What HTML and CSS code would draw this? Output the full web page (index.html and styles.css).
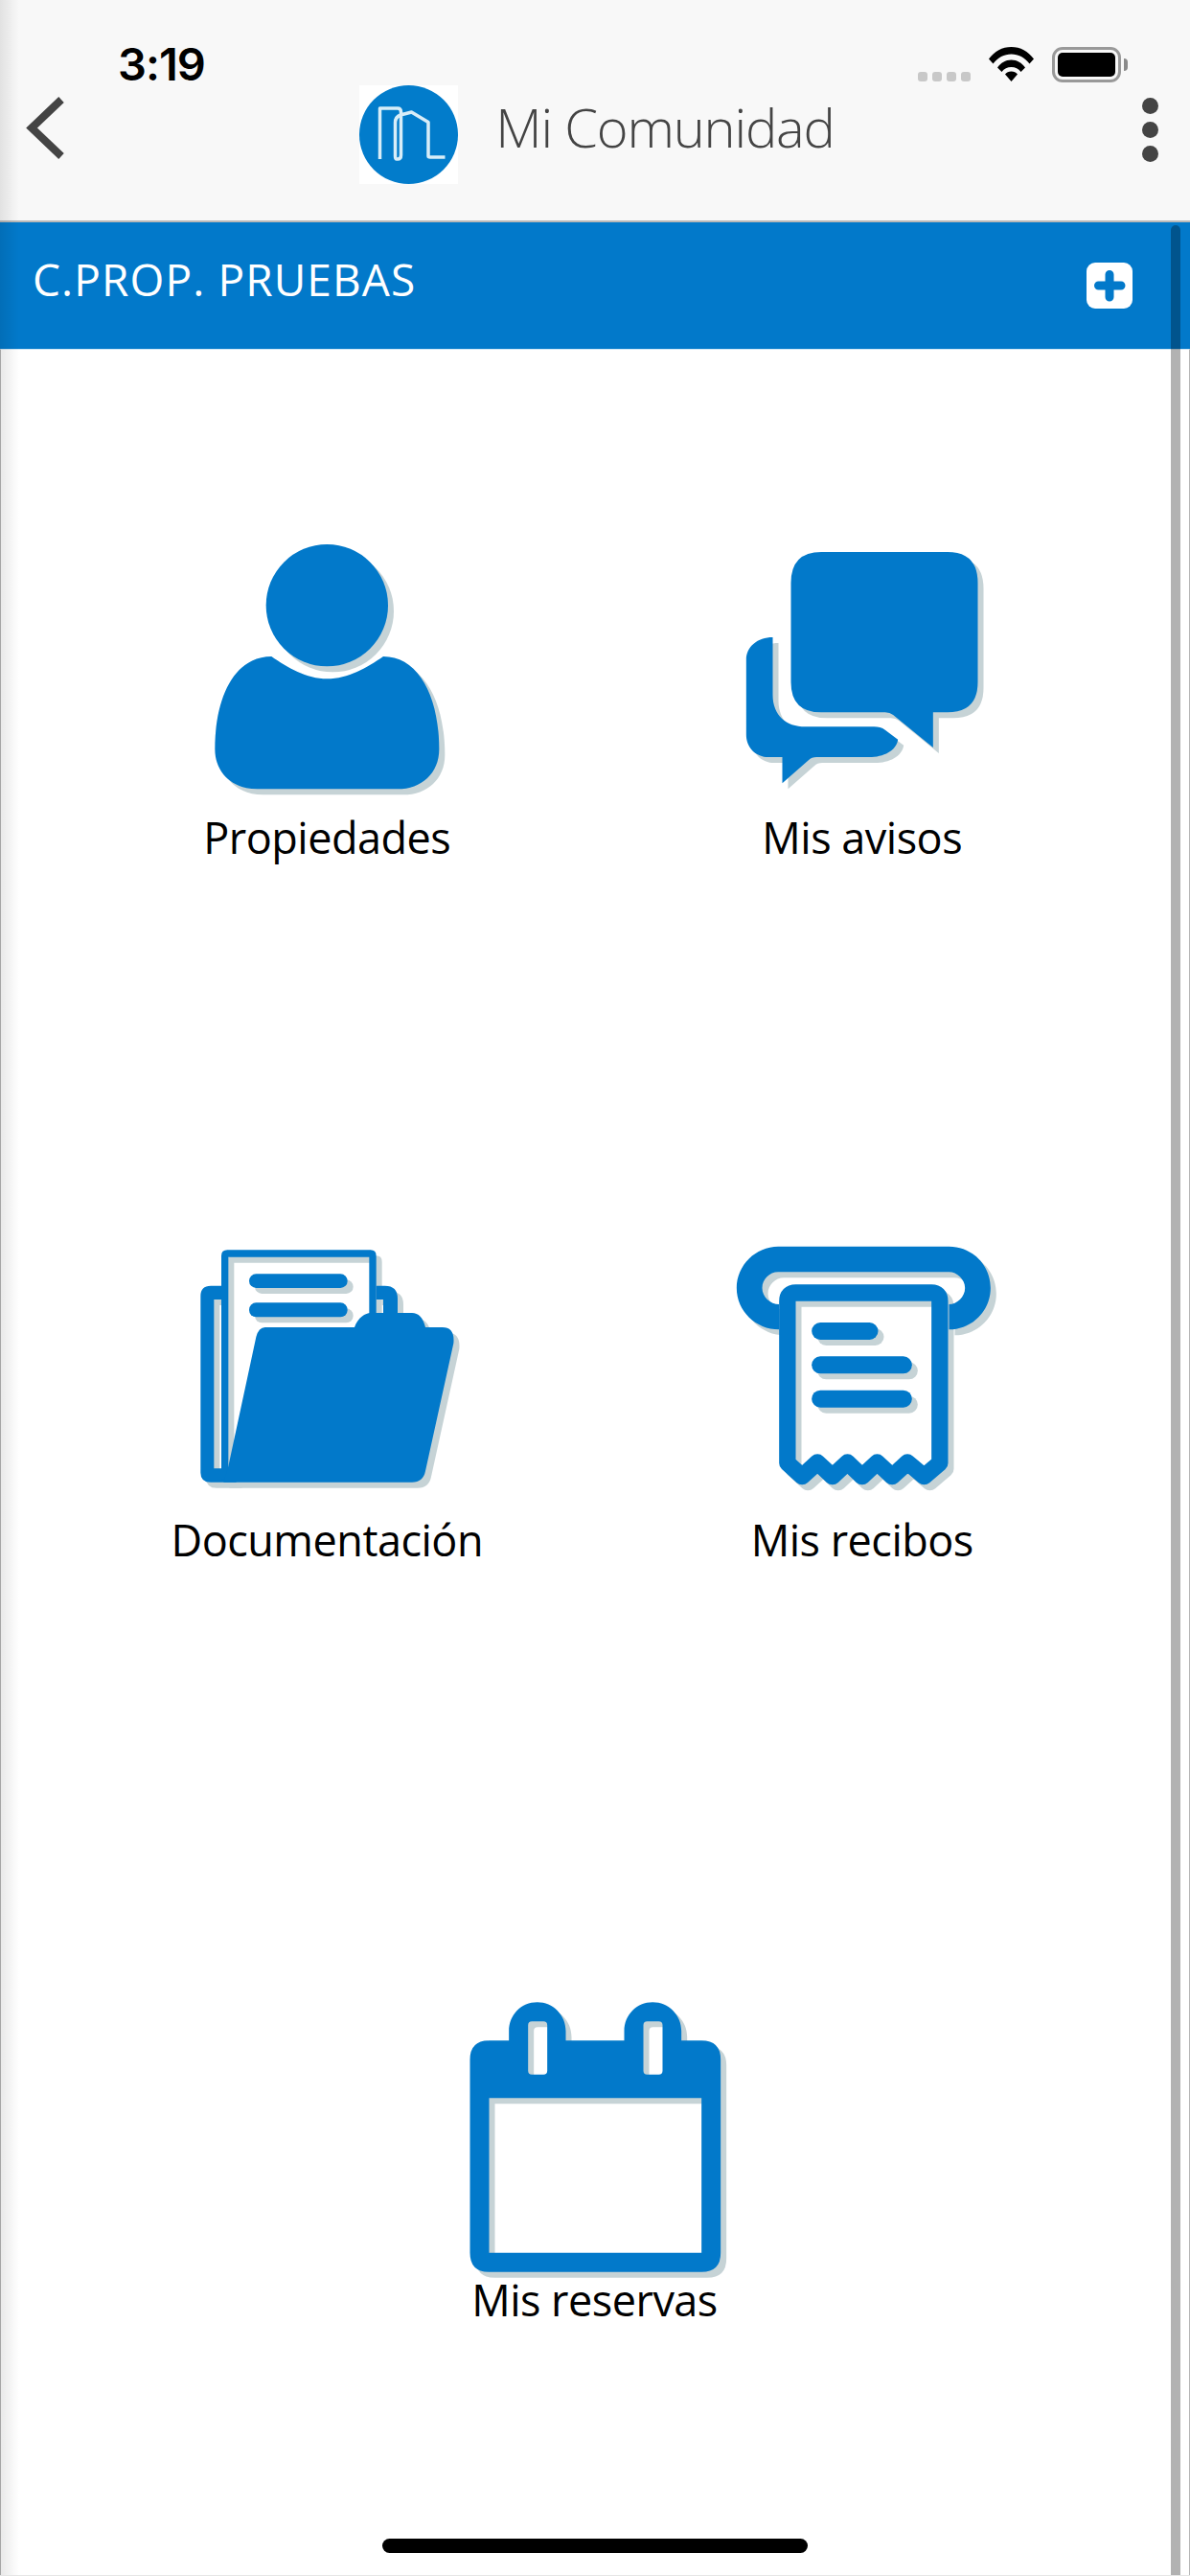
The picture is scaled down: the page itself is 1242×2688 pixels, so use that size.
FILE: index.html
```html
<!DOCTYPE html>
<html lang="es">
<head>
<meta charset="utf-8">
<title>Mi Comunidad</title>
<link rel="stylesheet" href="styles.css">
</head>
<body>
<div class="app">
  <header class="topbar">
    <div class="status">
      <span class="time">3:19</span>
      <div class="status-icons">
        <div class="signal"><i></i><i></i><i></i><i></i></div>
        <svg class="wifi" width="47" height="36" viewBox="0 0 47 36"><path d="M0 12.500C6 4.500 14 0 23.500 0S41 4.500 47 12.500L42.500 17.500C37.500 11 31 7.500 23.500 7.500S9.500 11 4.500 17.500Z"/><path d="M9 21.500C12.500 16.500 17.500 13.500 23.500 13.500S34.500 16.500 38 21.500L33.500 26C31 22.800 27.500 21 23.500 21S16 22.800 13.500 26Z"/><path d="M17 28.500C18.500 26.500 20.800 25.500 23.500 25.500S28.500 26.500 30 28.500L23.500 36Z"/></svg>
        <div class="battery"><div class="battery-fill"></div></div>
        <div class="battery-nub"></div>
      </div>
    </div>
    <nav class="nav">
      <svg class="back" width="40" height="66" viewBox="0 0 40 66"><path d="M37 3L6 32.500L37 62" fill="none" stroke="#444" stroke-width="8"/></svg>
      <div class="brand">
        <svg class="logo" width="103" height="103" viewBox="0 0 103 103">
          <rect width="103" height="103" fill="#fff"/>
          <circle cx="51.500" cy="51.500" r="51.500" fill="#027ccb"/>
          <path d="M21.500 77V24H40Q43.500 24 43.500 28V73Q43.500 77 40 77H39Q37.500 77 37.500 74V39Q37.500 33 43 31L54.500 28L72 38.500V74Q72 75 74 75H89.500" fill="none" stroke="#d8edf8" stroke-width="3.500" stroke-linejoin="round"/>
        </svg>
        <span class="brand-name">Mi Comunidad</span>
      </div>
      <div class="menu"><i></i><i></i><i></i></div>
    </nav>
  </header>

  <section class="bar">
    <h1 class="bar-title">C.PROP. PRUEBAS</h1>
    <svg class="add" width="48" height="48" viewBox="0 0 48 48"><rect width="48" height="48" rx="9" fill="#fff"/><path d="M24 12.500V36M12.500 24H36" fill="none" stroke="#0279ca" stroke-width="9" stroke-linecap="round"/></svg>
  </section>

  <main class="menu-grid">
    <a class="tile">
      <svg class="tile-icon" width="340" height="306" viewBox="-27 0 1020 918">
        <circle cx="484" cy="275" r="191"/>
        <path d="M310 435C360 470 420 505 484 505C550 505 610 470 660 435C770 435 835 560 835 725C835 800 780 850 705 850H265C190 850 133 800 133 725C133 560 195 435 310 435Z"/>
      </svg>
      <span class="tile-label">Propiedades</span>
    </a>
    <a class="tile">
      <svg class="tile-icon" width="340" height="306" viewBox="-31.500 0 1020 918">
        <path d="M350 108H745Q840 108 840 205V515Q840 610 745 610H700V720L575 618Q565 610 550 610H350Q255 610 255 515V205Q255 108 350 108Z"/>
        <path d="M198 375V555C198 620 240 655 300 655H515Q535 655 550 665L590 695C585 730 545 750 500 750H335Q320 750 310 760L228 832V750H185C145 750 115 720 115 680V445C115 405 150 375 198 375Z"/>
      </svg>
      <span class="tile-label">Mis avisos</span>
    </a>
    <a class="tile">
      <svg class="tile-icon" width="340" height="299" viewBox="3 0 1020 897">
        <path d="M183 185H150Q118 185 118 217V770Q118 800 150 800H230V757H160V228H183Z"/>
        <path d="M668 185H695Q735 185 735 225V300H690V228H668Z"/>
        <path class="outline" stroke-width="22" d="M194 790V92Q194 84 202 84H650Q657 84 657 92V300"/>
        <rect x="270" y="148" width="308" height="44" rx="22"/>
        <rect x="270" y="238" width="308" height="45" rx="22"/>
        <path d="M320 315H600C610 285 635 270 650 270H780C800 270 815 285 822 315H875Q915 315 910 365L822 765Q815 800 780 800H190L205 750L292 345Q300 315 320 315Z"/>
      </svg>
      <span class="tile-label">Documentación</span>
    </a>
    <a class="tile">
      <svg class="tile-icon" width="340" height="299" viewBox="-31.500 0 1020 897">
        <path d="M215 62H750C822 62 880 120 880 192C880 264 822 322 750 322V243C775 243 800 220 800 192C800 165 775 142 750 142H215C188 142 165 165 165 192C165 220 190 243 218 243V322C145 322 85 264 85 192C85 120 145 62 215 62Z"/>
        <path class="outline" stroke-width="52" d="M244 740V233Q244 207 270 207H695Q721 207 721 233V740L672 782L620 738L572 782L525 738L478 782L432 738L385 782L338 738L290 782Z"/>
        <rect x="320" y="300" width="208" height="54" rx="27"/>
        <rect x="320" y="406" width="314" height="54" rx="27"/>
        <rect x="320" y="512" width="314" height="54" rx="27"/>
      </svg>
      <span class="tile-label">Mis recibos</span>
    </a>
    <a class="tile tile-wide">
      <svg class="tile-icon" width="340" height="312" viewBox="-28.500 0 1020 936">
        <path fill-rule="evenodd" d="M150 208H212V178C212 128 250 88 301 88C350 88 390 128 390 178V208H573V178C573 128 612 88 662 88C712 88 752 128 752 178V208H815Q875 208 875 268V872Q875 932 815 932H150Q90 932 90 872V268Q90 208 150 208ZM150 388V872H815V388ZM284 148Q272 148 272 160V302Q272 314 284 314H320Q332 314 332 302V160Q332 148 320 148ZM645 148Q633 148 633 160V302Q633 314 645 314H681Q693 314 693 302V160Q693 148 681 148Z"/>
      </svg>
      <span class="tile-label">Mis reservas</span>
    </a>
  </main>

  <div class="home-bar"></div>
  <div class="edge-shade"></div>
  <div class="scrollbar"></div>
</div>
</body>
</html>
```

FILE: styles.css
```css
* { box-sizing: border-box; }

html, body {
  margin: 0;
  padding: 0;
  background: #fff;
}

.app {
  position: relative;
  width: 1242px;
  height: 2688px;
  overflow: hidden;
  background: #fff;
  display: flex;
  flex-direction: column;
  font-family: "Open Sans", "Noto Sans", sans-serif;
  border-bottom: 1px solid #e6e6e6;
}

.topbar {
  flex: none;
  height: 232px;
  padding-top: 46px;
  background: #f8f8f8;
  border-bottom: 2px solid #b9b9b9;
}

.status {
  height: 42px;
  display: flex;
  justify-content: space-between;
  padding: 0 65px 0 123px;
}

.time {
  font-family: "Inter", "Liberation Sans", sans-serif;
  font-size: 47px;
  font-weight: 600;
  line-height: 42px;
  color: #000;
  letter-spacing: -1px;
}

.status-icons {
  display: flex;
  align-items: flex-start;
}

.signal {
  display: flex;
  gap: 5px;
  margin: 29px 19px 0 0;
}

.signal i {
  width: 10px;
  height: 10px;
  border-radius: 3px;
  background: #c8c8c8;
}

.wifi {
  margin: 3px 19px 0 0;
  fill: #000;
}

.battery {
  width: 72px;
  height: 37px;
  margin-top: 3px;
  padding: 3px 3px;
  border: 3px solid #999;
  border-radius: 11px;
}

.battery-fill {
  width: 100%;
  height: 100%;
  background: #000;
  border-radius: 5px;
}

.battery-nub {
  width: 4px;
  height: 13px;
  margin: 15px 0 0 3px;
  background: #8a8a8a;
  border-radius: 0 4px 4px 0;
}

.nav {
  height: 104px;
  display: grid;
  grid-template-columns: 1fr auto 1fr;
  padding: 0 33px 0 27px;
}

.back {
  margin-top: 13px;
}

.brand {
  display: flex;
  align-items: flex-start;
  margin-left: 10px;
  padding-top: 1px;
  gap: 39px;
}

.brand-name {
  font-size: 56px;
  font-weight: 300;
  line-height: 86px;
  color: #444;
  letter-spacing: -1.200px;
}

.menu {
  justify-self: end;
  display: flex;
  flex-direction: column;
  gap: 8px;
  padding-top: 14px;
}

.menu i {
  width: 17px;
  height: 17px;
  border-radius: 50%;
  background: #444;
}

.bar {
  flex: none;
  height: 132px;
  background: #0279ca;
  display: flex;
  align-items: center;
  justify-content: space-between;
  padding: 0 60px 0 34px;
}

.bar-title {
  margin: 0;
  font-size: 46px;
  font-weight: 400;
  color: #fff;
  letter-spacing: 1.100px;
  line-height: 60px;
  margin-top: -14px;
}

.menu-grid {
  flex: 1;
  display: grid;
  grid-template-columns: 558.500px 558.500px;
  grid-template-rows: 740px 780px auto;
  padding: 175px 0 0 61px;
  align-content: start;
  border-top: 1px solid #cfe6f5;
  border-left: 1px solid #b5b5b5;
  border-right: 1px solid #b5b5b5;
}

.tile {
  display: flex;
  flex-direction: column;
  align-items: center;
}

.tile-wide {
  grid-column: 1 / -1;
}

.tile-icon {
  overflow: visible;
  fill: #0279ca;
  filter: drop-shadow(6.700px 6.700px 0 #c6d3d6);
}

.outline {
  fill: none;
  stroke: #0279ca;
  stroke-linejoin: round;
}

.tile-label {
  font-size: 45px;
  font-weight: 400;
  line-height: 56px;
  color: #000;
  letter-spacing: -.5px;
}

.home-bar {
  position: absolute;
  left: 399px;
  top: 2649px;
  width: 444px;
  height: 15px;
  border-radius: 8px;
  background: #000;
}

.edge-shade {
  position: absolute;
  left: 0;
  top: 0;
  bottom: 0;
  width: 20px;
  background: linear-gradient(to right, rgba(0, 0, 0, .09), rgba(0, 0, 0, 0));
}

.scrollbar {
  position: absolute;
  left: 1222px;
  top: 235px;
  bottom: 0;
  width: 10px;
  border-radius: 5px 5px 0 0;
  background: rgba(0, 0, 0, .3);
}
```
